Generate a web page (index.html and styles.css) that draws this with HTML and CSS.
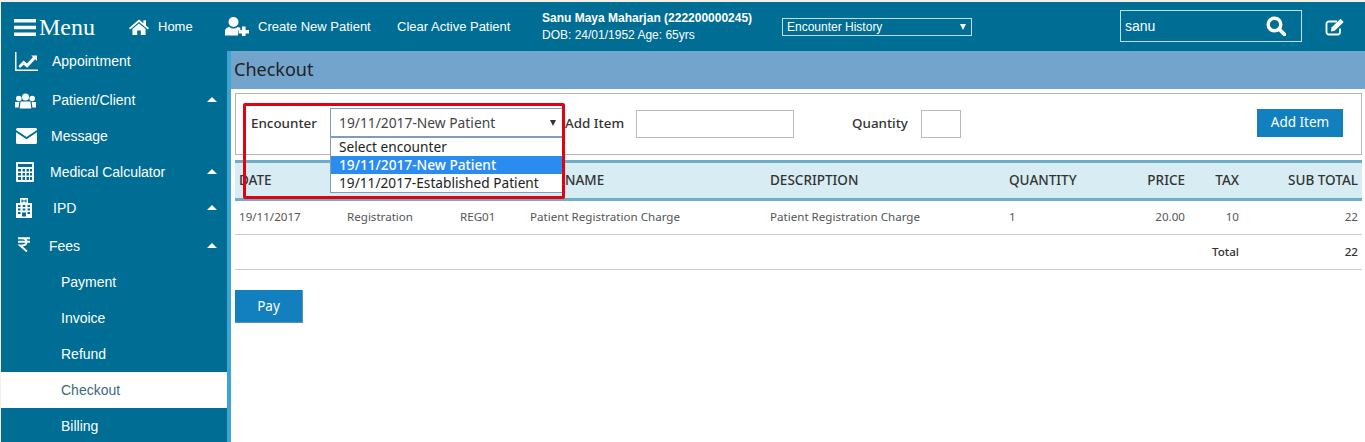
FILE: index.html
```html
<!DOCTYPE html>
<html lang="en">
<head>
<meta charset="utf-8">
<title>Checkout</title>
<link rel="stylesheet" href="styles.css">
</head>
<body>
<header class="topbar">
  <div class="brand">
    <svg class="burger" viewBox="0 0 22 17"><path d="M0 0h22v3.4H0zM0 6.8h22v3.4H0zM0 13.6h22V17H0z"/></svg>
    <span class="brand-text">Menu</span>
  </div>
  <a class="nav nav-home">
    <svg class="ico-home" viewBox="0 0 20 16"><path d="M10 0.5 0 9l1.2 1.4L10 3l8.8 7.4L20 9l-3-2.6V1.2h-2.6v3L10 .5zM10 4.4 3.4 10v6h4.8v-4.4h3.6V16h4.8v-6L10 4.4z"/></svg>
    <span>Home</span>
  </a>
  <a class="nav nav-create">
    <svg class="ico-adduser" viewBox="0 0 24 19"><circle cx="8.5" cy="5" r="5"/><path d="M0 18.5v-4c0-3 2.500-4.500 4.500-4.500 1 1 2.500 1.600 4 1.600s3-.6 4-1.600c1 0 2 .4 2.800 1v2.500h-2.300v5H0z"/><path d="M17 9.500h3.600V13H24v3.600h-3.400V20H17v-3.400h-3.400V13H17z"/></svg>
    <span>Create New Patient</span>
  </a>
  <a class="nav nav-clear">Clear Active Patient</a>
  <div class="patient">
    <div class="patient-name">Sanu Maya Maharjan (222200000245)</div>
    <div class="patient-dob">DOB: 24/01/1952 Age: 65yrs</div>
  </div>
  <div class="history"><span>Encounter History</span><i class="tri-down"></i></div>
  <div class="search">
    <span>sanu</span>
    <svg class="ico-search" viewBox="0 0 20 20"><circle cx="8.500" cy="8.500" r="6.300" fill="none" stroke="#fff" stroke-width="3.400"/><path d="M13 13l5.500 5.500" stroke="#fff" stroke-width="3.800" stroke-linecap="round"/></svg>
  </div>
  <svg class="ico-edit" viewBox="0 0 20 18"><path d="M15 10.500V14a2.500 2.500 0 0 1-2.500 2.500H4A2.500 2.500 0 0 1 1.500 14V6A2.500 2.500 0 0 1 4 3.500h8" fill="none" stroke="#fff" stroke-width="1.800"/><path d="M6.500 9.500 15.500 .8l3.200 3.200-9 8.800-3.700.6z" fill="#fff"/></svg>
</header>

<div class="layout">
  <nav class="sidebar">
    <a class="side side-first">
      <svg class="side-ico ico-chart" viewBox="0 0 23 19"><path d="M0 0h1.500v17.500H23V19H0z"/><path d="M3.500 14l5-5.500 3.500 3 6-6.500-2-1.500h6v5.500l-1.800-1.800-8 8.500-3.500-3-3.700 3.300z"/></svg>
      <span>Appointment</span>
    </a>
    <a class="side side-patient">
      <svg class="side-ico ico-group" viewBox="0 0 21 16"><circle cx="10.500" cy="4" r="3.500"/><circle cx="3.800" cy="5.500" r="2.800"/><circle cx="17.200" cy="5.500" r="2.800"/><path d="M5.500 8.500h10l.8 7H4.700zM0 9h4.300l-.7 5.500H0zM16.700 9H21v5.500h-3.600z"/></svg>
      <span>Patient/Client</span><i class="tri-up"></i>
    </a>
    <a class="side">
      <svg class="side-ico ico-mail" viewBox="0 0 21 16"><path d="M1.500 0h18A1.500 1.500 0 0 1 21 1.500V2l-10.500 7L0 2v-.5A1.500 1.500 0 0 1 1.500 0zM0 4.200l10.500 7 10.500-7v10.300a1.500 1.500 0 0 1-1.500 1.500h-18A1.500 1.500 0 0 1 0 14.500z"/></svg>
      <span>Message</span>
    </a>
    <a class="side">
      <svg class="side-ico ico-calc" viewBox="0 0 18 20"><path fill-rule="evenodd" d="M1 0h16a1 1 0 0 1 1 1v18a1 1 0 0 1-1 1H1a1 1 0 0 1-1-1V1a1 1 0 0 1 1-1zM2 2v3h14V2zM2 7v2.500h3V7zm4.500 0v2.500h2.500V7zM10.500 7v2.500H13V7zM14 7v2.500h2V7zM2 11v2.500h3V11zm4.500 0v2.500h2.500V11zM10.500 11v2.500H13V11zM14 11v2.500h2V11zM2 15v3h3v-3zm4.500 0v3h2.500v-3zM10.500 15v3H13v-3zM14 15v3h2v-3z"/></svg>
      <span>Medical Calculator</span><i class="tri-up"></i>
    </a>
    <a class="side side-ipd">
      <svg class="side-ico ico-hosp" viewBox="0 0 16 20"><path fill-rule="evenodd" d="M4 0h8v5h4v15H0V5h4zM5.500 1.500v3h1.200V3.500h2.600v1h1.200v-3H9.300v1H6.700v-1zM2 7v2h2.500V7zm4.700 0v2h2.600V7zm4.800 0v2H14V7zM2 10.500v2h2.500v-2zm4.700 0v2h2.600v-2zm4.800 0v2H14v-2zM2 14v2h2.500v-2zm9.500 0v2H14v-2zM6 14.500V18.500h4v-4z"/></svg>
      <span>IPD</span><i class="tri-up"></i>
    </a>
    <a class="side side-fees">
      <svg class="side-ico ico-inr" viewBox="0 0 14 15"><path d="M1 1.300h12M1 4.800h12M3 1.300h2.500c2.600 0 4 1.500 4 3.500S8 8.500 5.500 8.500H3l7 6" fill="none" stroke="#fff" stroke-width="1.900"/></svg>
      <span>Fees</span><i class="tri-up"></i>
    </a>
    <a class="side sub">Payment</a>
    <a class="side sub">Invoice</a>
    <a class="side sub">Refund</a>
    <a class="side sub active">Checkout</a>
    <a class="side sub">Billing</a>
  </nav>
  <div class="rail"></div>

  <main class="main">
    <h1 class="title">Checkout</h1>
    <section class="panel">
      <label class="lbl lbl-enc">Encounter</label>
      <div class="select">
        <span>19/11/2017-New Patient</span><i class="tri-down dark"></i>
        <ul class="options">
          <li>Select encounter</li>
          <li class="sel">19/11/2017-New Patient</li>
          <li>19/11/2017-Established Patient</li>
        </ul>
      </div>
      <label class="lbl lbl-item">Add Item</label>
      <div class="input input-item"></div>
      <label class="lbl lbl-qty">Quantity</label>
      <div class="input input-qty"></div>
      <button class="btn btn-add">Add Item</button>
    </section>

    <table class="grid">
      <colgroup>
        <col class="c1"><col class="c2"><col class="c3"><col class="c4"><col class="c5"><col class="c6"><col class="c7"><col class="c8"><col class="c9">
      </colgroup>
      <thead>
        <tr><th>DATE</th><th></th><th></th><th class="nm">NAME</th><th>DESCRIPTION</th><th>QUANTITY</th><th class="r">PRICE</th><th class="r">TAX</th><th class="r">SUB TOTAL</th></tr>
      </thead>
      <tbody>
        <tr><td>19/11/2017</td><td>Registration</td><td>REG01</td><td>Patient Registration Charge</td><td>Patient Registration Charge</td><td>1</td><td class="r">20.00</td><td class="r">10</td><td class="r">22</td></tr>
        <tr class="total"><td colspan="7"></td><td class="r">Total</td><td class="r">22</td></tr>
      </tbody>
    </table>

    <button class="btn btn-pay">Pay</button>
    <div class="redbox"></div>
  </main>
</div>
</body>
</html>
```
FILE: styles.css
```css
* { box-sizing: border-box; }
html, body { margin: 0; height: 442px; overflow: hidden; }
body { background: #f4f0e6; padding: 2px 0 0 1px; font-family: "Liberation Sans", Arial, sans-serif; color: #fff; }
i { font-style: normal; }
a { display: flex; align-items: center; color: inherit; }

.topbar { display: flex; align-items: center; height: 49px; background: #006d94; font-size: 13px; }
.brand { display: flex; align-items: center; width: 128px; padding-left: 13px; }
.burger { width: 22px; height: 17px; fill: #fff; margin-top: 2px; }
.brand-text { font: 24px "Liberation Serif", serif; margin-left: 3px; margin-top: 2px; }
.nav { gap: 9px; white-space: nowrap; }
.nav-home { width: 96px; }
.ico-home { width: 20px; height: 16px; fill: #fff; }
.nav-create { width: 172px; gap: 9px; }
.ico-adduser { width: 24px; height: 19px; fill: #fff; }
.nav-clear { width: 145px; }
.patient { width: 240px; font-size: 12px; line-height: 17px; }
.patient-name { font-weight: bold; }
.history { display: flex; align-items: center; justify-content: space-between; width: 190px; height: 18px; border: 1px solid #bfe0ea; padding: 0 5px 0 4px; font-size: 12px; }
.tri-down { width: 0; height: 0; border-left: 3.500px solid transparent; border-right: 3.500px solid transparent; border-top: 6px solid #fff; }
.tri-down.dark { border-top-color: #333; }
.search { display: flex; align-items: center; justify-content: space-between; width: 182px; height: 32px; margin: 0 0 1px 148px; border: 1px solid #bfe0ea; padding: 0 15px 0 4px; font-size: 14px; }
.ico-search { width: 20px; height: 20px; }
.ico-edit { width: 20px; height: 18px; margin-left: 23px; }

.layout { display: flex; height: 391px; }
.sidebar { flex: 0 0 226px; background: #006d94; display: flex; flex-direction: column; font-size: 14px; overflow: hidden; }
.side { position: relative; flex: 0 0 36px; padding-left: 14px; }
.side-first { flex-basis: 20px; margin-bottom: 11px; }
.side-ico { fill: #fff; flex: none; }
.ico-chart { width: 23px; height: 19px; margin: 0 14px 0 0; }
.ico-group { width: 21px; height: 16px; margin: 2px 16px 0 0; }
.ico-mail { width: 21px; height: 16px; margin: 0 14px 0 1px; }
.ico-calc { width: 18px; height: 20px; margin: 0 16px 0 1px; }
.ico-hosp { width: 16px; height: 20px; margin: 0 21px 0 1px; }
.ico-inr { width: 14px; height: 15px; margin: -4px 18px 0 2px; }
.side-fees { margin-top: 2px; }
.tri-up { position: absolute; right: 10px; top: 15px; width: 0; height: 0; border-left: 5.500px solid transparent; border-right: 5.500px solid transparent; border-bottom: 5px solid #fff; }
.side.sub { padding-left: 60px; }
.side.active { background: #fff; color: #3a6a80; }
.rail { flex: 0 0 4px; background: #3fa4d2; }

.main { position: relative; flex: 1; background: #fff; color: #333; font-family: "Noto Sans", sans-serif; min-width: 0; }
.title { margin: 0; height: 38px; background: #73a4cc; padding-left: 3px; font-size: 18px; font-weight: 400; line-height: 36px; color: #222; }
.panel { display: flex; align-items: center; height: 62px; margin: 4px 3px 0 4px; border: 1px solid #b5b5b5; font-size: 14px; }
.lbl { font-weight: 500; color: #333; white-space: nowrap; font-size: 13.400px; margin-bottom: 2px; }
.lbl-enc { margin-left: 15px; width: 79px; }
.select { position: relative; display: flex; align-items: center; justify-content: space-between; width: 234px; height: 29px; margin-bottom: 3px; border: 1px solid #7f9db9; padding: 0 7px 0 8px; font-size: 13.800px; color: #444; }
.options { position: absolute; left: -1px; top: 28px; width: 234px; margin: 0; padding: 0; list-style: none; background: #fff; border: 1px solid #7f9db9; font-size: 13.700px; line-height: 18px; color: #222; }
.options li { padding-left: 8px; white-space: nowrap; }
.options .sel { background: #2a8cef; color: #fff; font-weight: 500; }
.lbl-item { margin-left: 1px; width: 71px; }
.input { height: 28px; border: 1px solid #bbb; }
.input-item { width: 158px; }
.lbl-qty { margin-left: 58px; width: 69px; }
.input-qty { width: 40px; }
.btn { border: 0; background: #127fbe; color: #fff; font-family: "Noto Sans", sans-serif; font-size: 13.500px; padding: 0 0 2px; }
.btn-add { width: 86px; height: 28px; margin-left: auto; margin-right: 18px; margin-bottom: 2px; }

.grid { width: 1127px; margin: 5px 0 0 4px; border-collapse: collapse; table-layout: fixed; font-size: 11.600px; color: #555; }
.c1 { width: 108px; } .c2 { width: 113px; } .c3 { width: 70px; } .c4 { width: 240px; } .c5 { width: 239px; } .c6 { width: 115px; } .c7 { width: 69px; } .c8 { width: 54px; } .c9 { width: 119px; }
th, td { padding: 0 4px; text-align: left; white-space: nowrap; overflow: hidden; }
th { height: 38px; padding-bottom: 2px; background: #d8ecf3; border-top: 3px solid #6faec8; border-bottom: 3px solid #6faec8; font-size: 13.500px; font-weight: 500; color: #333; }
th.nm { padding-left: 39px; }
td { height: 35px; padding-bottom: 2px; border-bottom: 1px solid #ccc; }
.r { text-align: right; }
.total td { font-weight: 500; color: #333; }
.btn-pay { display: block; width: 68px; height: 33px; margin: 20px 0 0 4px; padding-bottom: 0; border-bottom: 1px solid #5f93b3; border-right: 1px solid #5f93b3; }
.redbox { position: absolute; left: 12px; top: 52px; width: 322px; height: 96px; border: 3px solid #e3000f; border-radius: 2px; pointer-events: none; }
```
